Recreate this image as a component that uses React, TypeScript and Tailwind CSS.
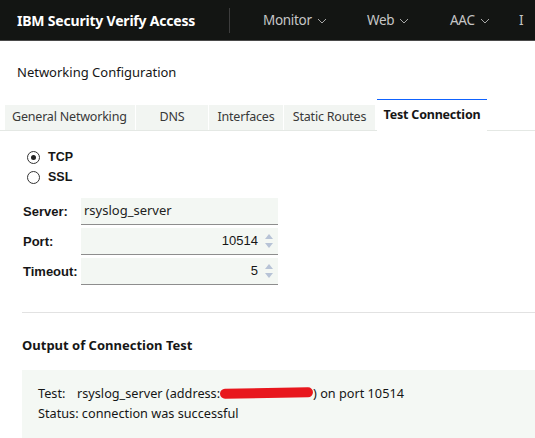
import React from "react";

const plex = { fontFamily: '"Noto Sans", "Open Sans", sans-serif' };
const arial = { fontFamily: '"Liberation Sans", Arial, sans-serif' };

function Chevron() {
  return (
    <svg width="10" height="6" viewBox="0 0 10 6" className="ml-[5px] mt-[2px]">
      <path d="M1 1l4 4 4-4" fill="none" stroke="#a8a8a8" strokeWidth="1" />
    </svg>
  );
}

function Spinner() {
  return (
    <div className="flex flex-col gap-[4px] ml-[7px]">
      <svg width="8" height="5" viewBox="0 0 8 5">
        <path d="M4 0L8 5H0z" fill="#b7c3d6" />
      </svg>
      <svg width="8" height="5" viewBox="0 0 8 5">
        <path d="M0 0h8L4 5z" fill="#b7c3d6" />
      </svg>
    </div>
  );
}

const tabs = [
  { label: "General Networking", w: "w-[130px]", left: true },
  { label: "DNS", w: "w-[72px]" },
  { label: "Interfaces", w: "w-[74px]" },
  { label: "Static Routes", w: "w-[91px]" },
];

export default function App() {
  return (
    <div className="w-[535px] h-[438px] overflow-hidden bg-white text-[#161616]" style={plex}>
      {/* top bar */}
      <header className="h-[41px] bg-[#131513] border-b border-[#4a4a4a] flex items-center whitespace-nowrap">
        <div className="pl-[17px] w-[229px] text-[14px] font-bold text-white tracking-[-0.2px]">
          IBM Security Verify Access
        </div>
        <div className="w-px h-[25px] bg-[#3d3d3d]" />
        <nav className="flex items-center text-[13.5px] text-[#c6c6c6] pl-[33px]">
          <div className="w-[104px] flex items-center tracking-[-0.3px]">Monitor<Chevron /></div>
          <div className="w-[83px] flex items-center tracking-[-0.3px]">Web<Chevron /></div>
          <div className="w-[69px] flex items-center tracking-[-0.3px]">AAC<Chevron /></div>
          <div>I</div>
        </nav>
      </header>

      <div className="pl-[17px] pt-[21px] text-[13px] leading-[20px]">Networking Configuration</div>

      {/* tabs */}
      <div className="mt-[17px] flex items-end border-b border-[#e4e8e4] pl-[5px] text-[12.5px] whitespace-nowrap tracking-[-0.2px]">
        {tabs.map((t) => (
          <div
            key={t.label}
            className={`${t.w} h-[25px] mr-px bg-[#f2f5f2] flex items-center ${t.left ? "pl-[7px]" : "justify-center"} text-[#393939]`}
          >
            {t.label}
          </div>
        ))}
        <div className="w-[110px] h-[32px] -mb-px ml-px border-t border-[#0f62fe] bg-white flex items-center justify-center font-bold text-[#161616]">
          Test Connection
        </div>
      </div>

      {/* protocol radios */}
      <div className="pl-[27px] pt-[16px] text-[12.5px] font-bold" style={arial}>
        <label className="flex items-center h-[20px]">
          <span className="w-[13px] h-[13px] rounded-full border border-[#333] flex items-center justify-center mr-[8px]">
            <span className="w-[5px] h-[5px] rounded-full bg-[#222]" />
          </span>
          TCP
        </label>
        <label className="flex items-center h-[20px]">
          <span className="w-[13px] h-[13px] rounded-full border border-[#333] mr-[8px]" />
          SSL
        </label>
      </div>

      {/* fields */}
      <div className="pl-[23px] pt-[11px] flex flex-col gap-[3px] text-[13px]" style={arial}>
        <div className="flex items-center">
          <span className="w-[58px] font-bold">Server:</span>
          <div className="w-[197px] h-[27px] bg-[#f3f7f3] border-b border-[#8d8d8d] flex items-start pt-[3px] pl-[3px] text-[#222]" style={plex}>
            rsyslog_server
          </div>
        </div>
        <div className="flex items-center">
          <span className="w-[58px] font-bold">Port:</span>
          <div className="w-[197px] h-[27px] bg-[#f3f7f3] border-b border-[#8d8d8d] flex items-center justify-end pr-[5px]">
            10514
            <Spinner />
          </div>
        </div>
        <div className="flex items-center">
          <span className="w-[58px] font-bold">Timeout:</span>
          <div className="w-[197px] h-[27px] bg-[#f3f7f3] border-b border-[#8d8d8d] flex items-center justify-end pr-[5px]">
            5
            <Spinner />
          </div>
        </div>
      </div>

      <div className="ml-[22px] mt-[27px] border-t border-[#e2e2e2]" />

      <div className="pl-[22px] pt-[23px] text-[13px] font-bold leading-[18px]">Output of Connection Test</div>

      <div className="ml-[22px] mt-[16px] bg-[#f4f8f4] pl-[16px] pt-[13px] pb-[20px] text-[12.7px] leading-[20px] text-[#161616] whitespace-nowrap">
        <div className="flex items-center">
          <span className="w-[39px]">Test:</span>
          <span>rsyslog_server (address: </span>
          <span className="inline-block w-[93px] h-[10px] rounded-full bg-[#e8171d] -rotate-1" />
          <span>) on port 10514</span>
        </div>
        <div>Status: connection was successful</div>
      </div>
    </div>
  );
}
